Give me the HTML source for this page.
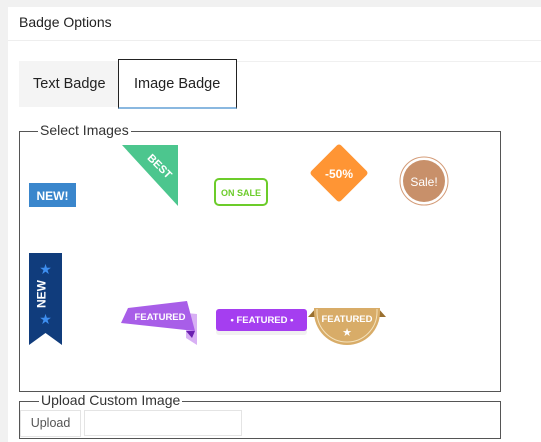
<!DOCTYPE html>
<html><head><style>
body{margin:0;width:541px;height:442px;overflow:hidden;background:#f1f1f1;font-family:"Liberation Sans",sans-serif;position:relative}
.p{position:absolute;left:8px;top:7px;right:0;bottom:0;background:#fff}
.a{position:absolute}
</style></head><body>
<div class="p"></div>
<div class="a" style="left:19px;top:14px;font-size:14px;color:#222">Badge Options</div>
<div class="a" style="left:8px;top:40px;right:0;height:1px;background:#eee"></div>
<div class="a" style="left:237px;top:61px;right:0;height:1px;background:#f0f0f0"></div>
<div class="a" style="left:19px;top:61px;width:99px;height:46px;background:#f4f4f4"></div>
<div class="a" style="left:33px;top:76px;font-size:14.5px;color:#222">Text Badge</div>
<div class="a" style="left:118px;top:59px;width:117px;height:47px;border:1px solid #222;border-bottom:2px solid #8ab8e0;background:#fff"></div>
<div class="a" style="left:134px;top:76px;font-size:14.5px;color:#222">Image Badge</div>
<div class="a" style="left:19px;top:131px;width:480px;height:259px;border:1px solid #555"></div>
<div class="a" style="left:38px;top:122px;padding:0 2px;background:#fff;font-size:14px;color:#333">Select Images</div>
<svg class="a" style="left:0;top:0" width="541" height="442">
<rect x="29" y="183" width="47" height="24" fill="#3a86cc"/>
<text x="52.5" y="200" font-size="12" font-weight="bold" fill="#fff" text-anchor="middle" font-family="Liberation Sans">NEW!</text>
<polygon points="122,145 178,145 178,206" fill="#4cc68e"/>
<text x="160" y="170" font-size="11" font-weight="bold" fill="#fff" text-anchor="middle" transform="rotate(45 160 166)" font-family="Liberation Sans">BEST</text>
<rect x="215" y="179" width="52" height="26" rx="4" fill="#fff" stroke="#6ccc2a" stroke-width="2"/>
<text x="241" y="196" font-size="9" font-weight="bold" fill="#6ccc2a" text-anchor="middle" font-family="Liberation Sans">ON SALE</text>
<rect x="318" y="152" width="42" height="42" rx="3" fill="#ff9534" transform="rotate(45 339 173)"/>
<text x="339" y="178" font-size="12" font-weight="bold" fill="#fff" text-anchor="middle" font-family="Liberation Sans">-50%</text>
<circle cx="424" cy="181" r="24" fill="#fff" stroke="#d49c78" stroke-width="1"/>
<circle cx="424" cy="181" r="21" fill="#c8906a"/>
<text x="424" y="186" font-size="12" fill="#fff" text-anchor="middle" font-family="Liberation Sans">Sale!</text>
<polygon points="29,253 62,253 62,345 45.5,333 29,345" fill="#103c7c"/>
<text x="45.5" y="294" font-size="12" font-weight="bold" fill="#fff" text-anchor="middle" transform="rotate(-90 45.5 294)" font-family="Liberation Sans">NEW</text>
<text x="45.5" y="274" font-size="14" fill="#3d8ef0" text-anchor="middle">★</text>
<text x="45.5" y="324" font-size="14" fill="#3d8ef0" text-anchor="middle">★</text>
<polygon points="186,313 197,314 197,345 186,338" fill="#d8b0f4"/>
<polygon points="186,331 195,331 192,338" fill="#6a20b0"/>
<polygon points="128,308 187,301 195,331 121,323" fill="#a85ee8"/>
<text x="160" y="320" font-size="9.5" font-weight="bold" fill="#fff" text-anchor="middle" font-family="Liberation Sans">FEATURED</text>
<rect x="216" y="313" width="91" height="22" rx="3" fill="#e8e8e8" opacity="0.6"/>
<rect x="216" y="309" width="91" height="22" rx="3" fill="#a53ef0"/>
<text x="262" y="323" font-size="9.5" font-weight="bold" fill="#fff" text-anchor="middle" font-family="Liberation Sans">• FEATURED •</text>
<polygon points="308,317 316,308 316,317" fill="#9a7030"/>
<polygon points="386,317 378,308 378,317" fill="#9a7030"/>
<path d="M314,308 H380 V312 A33,33 0 0 1 314,312 Z" fill="#d8ac68"/>
<path d="M317,309 V312 A30,30 0 0 0 377,312 V309" fill="none" stroke="#f4e2bc" stroke-width="1"/>
<text x="347" y="322" font-size="9.5" font-weight="bold" fill="#fff" text-anchor="middle" font-family="Liberation Sans">FEATURED</text>
<text x="347" y="336" font-size="11" fill="#fff" text-anchor="middle">★</text>
</svg>
<div class="a" style="left:19px;top:401px;width:480px;height:36px;border:1px solid #555"></div>
<div class="a" style="left:39px;top:392px;padding:0 2px;background:#fff;font-size:14px;color:#333">Upload Custom Image</div>
<div class="a" style="left:20px;top:410px;width:59px;height:25px;border:1px solid #e4e4e4;font-size:12.5px;color:#555;text-align:center;line-height:25px">Upload</div>
<div class="a" style="left:84px;top:410px;width:156px;height:24px;border:1px solid #e4e4e4"></div>
</body></html>
